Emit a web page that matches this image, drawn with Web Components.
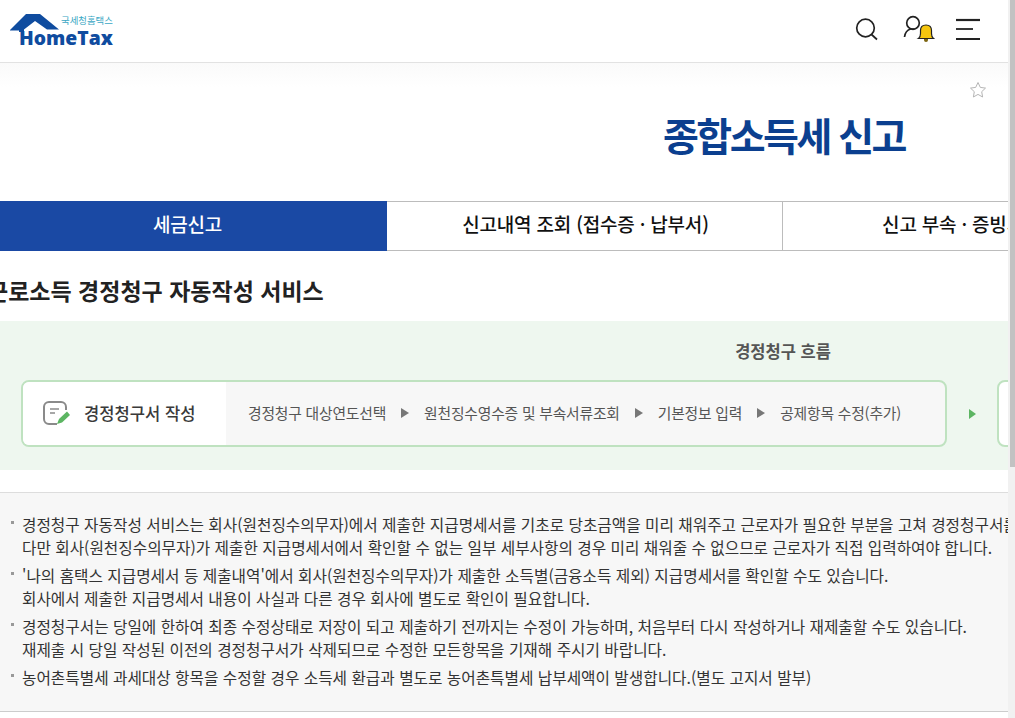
<!DOCTYPE html>
<html lang="ko">
<head>
<meta charset="utf-8">
<title>HomeTax</title>
<style>
  html, body { margin: 0; height: 100%; overflow: hidden; background: #fff; }
  body { font-family: "Noto Sans CJK KR", "Noto Sans", sans-serif; }
</style>
</head>
<body>
<tax-page>
  <tax-header slot="header"></tax-header>
  <tax-title slot="main">종합소득세 신고</tax-title>
  <tax-tabs slot="main"></tax-tabs>
  <tax-heading slot="main">근로소득 경정청구 자동작성 서비스</tax-heading>
  <tax-flow slot="main"></tax-flow>
  <tax-notes slot="main">
    <tax-note>경정청구 자동작성 서비스는 회사(원천징수의무자)에서 제출한 지급명세서를 기초로 당초금액을 미리 채워주고 근로자가 필요한 부분을 고쳐 경정청구서를 제출하는 서비스입니다.<br>다만 회사(원천징수의무자)가 제출한 지급명세서에서 확인할 수 없는 일부 세부사항의 경우 미리 채워줄 수 없으므로 근로자가 직접 입력하여야 합니다.</tax-note>
    <tax-note>'나의 홈택스 지급명세서 등 제출내역'에서 회사(원천징수의무자)가 제출한 소득별(금융소득 제외) 지급명세서를 확인할 수도 있습니다.<br>회사에서 제출한 지급명세서 내용이 사실과 다른 경우 회사에 별도로 확인이 필요합니다.</tax-note>
    <tax-note>경정청구서는 당일에 한하여 최종 수정상태로 저장이 되고 제출하기 전까지는 수정이 가능하며, 처음부터 다시 작성하거나 재제출할 수도 있습니다.<br>재제출 시 당일 작성된 이전의 경정청구서가 삭제되므로 수정한 모든항목을 기재해 주시기 바랍니다.</tax-note>
    <tax-note>농어촌특별세 과세대상 항목을 수정할 경우 소득세 환급과 별도로 농어촌특별세 납부세액이 발생합니다.(별도 고지서 발부)</tax-note>
  </tax-notes>
</tax-page>
<script>
class TaxPage extends HTMLElement {
	constructor() {
		super();
		this.attachShadow({ mode: "open" });
		this.shadowRoot.innerHTML = `
        <style>
          :host { display: flex; width: 1015px; height: 718px; overflow: hidden; }
          .view { width: 1008px; flex-shrink: 0; overflow: hidden; display: flex; flex-direction: column; }
          .body { width: 1400px; margin-left: -13px; background: linear-gradient(#fafafa, #fff 24px); }
          .bar { flex: 1; background: #f1f1f1; display: flex; justify-content: flex-end; }
          .thumb { width: 5px; background: #c2c2c2; height: 467px; }
        </style>
        <div class="view">
          <slot name="header"></slot>
          <div class="body"><slot name="main"></slot></div>
        </div>
        <div class="bar"><div class="thumb"></div></div>
      `;
	}
}

class TaxHeader extends HTMLElement {
	constructor() {
		super();
		this.attachShadow({ mode: "open" });
		this.shadowRoot.innerHTML = `
        <style>
          :host { display: flex; height: 62px; align-items: center; justify-content: space-between; border-bottom: 1px solid #e2e2e2; background: #fff; flex-shrink: 0; }
          .logo { position: relative; width: 104px; height: 36px; margin: -6px 0 0 10px; color: #0f4c9f; }
          .logo svg { position: absolute; left: 0; top: 0; }
          .logo b { position: absolute; left: 9px; top: 20px; font: 800 19.300px/16px "Open Sans", sans-serif; white-space: nowrap; }
          .logo span { position: absolute; left: 51px; top: 4px; font: 400 9.400px/12px "Noto Sans CJK KR", sans-serif; color: #3aa7c4; white-space: nowrap; }
          .tools { display: flex; align-items: center; margin: -4px 28px 0 0; }
          .user { margin: 0 21px 0 24px; }
        </style>
        <div class="logo">
          <svg width="60" height="36" viewBox="0 0 60 36"><path d="M0 20 16 4H30L49 19.500H37L25 11 14 19.500V22H9V20.500H0Z" fill="#0f4c9f"/></svg>
          <span>국세청홈택스</span><b>HomeTax</b>
        </div>
        <div class="tools">
          <svg width="24" height="24" viewBox="0 0 24 24" fill="none" stroke="#222" stroke-width="1.700"><circle cx="10.500" cy="11" r="8.800"/><path d="M16.500 17.500l5.500 5"/></svg>
          <svg class="user" width="32" height="28" viewBox="0 0 32 28" fill="none"><circle cx="10" cy="8" r="6.300" stroke="#222" stroke-width="1.700"/><path d="M1.500 22c.5-4.500 3-7 6-8h4" stroke="#222" stroke-width="1.700"/><path d="M15.500 23.500c1.500-1 2-2.500 2-5v-3c0-3.500 2-5.500 5.500-5.500s5.500 2 5.500 5.500v3c0 2.500.5 4 2 5z" fill="#f6c60e" stroke="#222" stroke-width="1.200"/><path d="M21 24h4v1a2 2 0 0 1-4 0z" fill="#7c6510"/></svg>
          <svg width="24" height="22" viewBox="0 0 24 22" fill="none" stroke="#222"><path d="M0 2h24" stroke-width="2.200"/><path d="M0 11h17" stroke-width="1.800"/><path d="M0 21h24" stroke-width="2"/></svg>
        </div>
      `;
	}
}

class TaxTitle extends HTMLElement {
	constructor() {
		super();
		this.attachShadow({ mode: "open" });
		this.shadowRoot.innerHTML = `
        <style>
          :host { display: block; height: 138px; width: 1022px; position: relative; }
          h1 { margin: 0; padding-top: 43px; text-align: right; padding-right: 104px; font: 700 39px/56px "Noto Sans CJK KR", sans-serif; color: #0b3f8f; letter-spacing: -2.500px; }
          svg { position: absolute; left: 982px; top: 18px; }
        </style>
        <h1><slot></slot></h1>
        <svg width="18" height="18" viewBox="0 0 18 18" fill="#fff" stroke="#b5b5b5"><path d="M9 1.500l2.300 4.900 5.200.7-3.800 3.600.9 5.300L9 13.400l-4.600 2.600.9-5.300L1.500 7.100l5.200-.7z"/></svg>
      `;
	}
}

class TaxTabs extends HTMLElement {
	constructor() {
		super();
		this.attachShadow({ mode: "open" });
		this.shadowRoot.innerHTML = `
        <style>
          :host { display: flex; height: 50px; font: 500 19px/44px "Noto Sans CJK KR", sans-serif; color: #111; letter-spacing: -.2px; }
          div { box-sizing: border-box; width: 396px; height: 50px; padding-left: 2px; text-align: center; border: solid #bcbcbc; border-width: 1px 1px 1px 0; flex-shrink: 0; background: #fff; white-space: nowrap; }
          .on { width: 400px; background: #1a49a4; border-color: #1a49a4; color: #fff; }
        </style>
        <div class="on">세금신고</div>
        <div>신고내역 조회 (접수증 · 납부서)</div>
        <div>신고 부속 · 증빙서류 제출</div>
      `;
	}
}

class TaxHeading extends HTMLElement {
	constructor() {
		super();
		this.attachShadow({ mode: "open" });
		this.shadowRoot.innerHTML = `
        <style>
          :host { display: block; height: 70px; }
          h2 { margin: 0; padding: 22px 0 0 0; font: 700 23px/34px "Noto Sans CJK KR", sans-serif; color: #222; white-space: nowrap; }
        </style>
        <h2><slot></slot></h2>
      `;
	}
}

class TaxFlow extends HTMLElement {
	constructor() {
		super();
		this.attachShadow({ mode: "open" });
		this.shadowRoot.innerHTML = `
        <style>
          :host { display: block; box-sizing: border-box; height: 149px; background: #eef7ef; padding: 19px 0 0 34px; }
          h3 { margin: 0; width: 1524px; text-align: center; font: 700 16.500px/22px "Noto Sans CJK KR", sans-serif; color: #555; }
          .row { display: flex; align-items: center; margin-top: 18px; white-space: nowrap; }
          .card { box-sizing: border-box; height: 67px; width: 926px; display: flex; flex-shrink: 0; border: 2px solid #bfe2c0; border-radius: 8px; overflow: hidden; background: #f7f7f7; }
          .name { box-sizing: border-box; width: 203px; background: #fff; display: flex; align-items: center; gap: 14px; padding: 0 0 2px 19px; font: 500 16.600px/24px "Noto Sans CJK KR", sans-serif; color: #3a3a3a; }
          .steps { flex: 1; display: flex; align-items: center; padding: 0 0 2px 22px; font: 400 14.800px/20px "Noto Sans CJK KR", sans-serif; color: #555; letter-spacing: -.2px; }
          .steps i { width: 0; height: 0; margin: 0 15px; border-left: 8px solid #777; border-top: 5px solid transparent; border-bottom: 5px solid transparent; }
          .next { width: 0; height: 0; margin: 0 21px 0 22px; border-left: 7px solid #5cb562; border-top: 5px solid transparent; border-bottom: 5px solid transparent; }
          .card.more { width: 200px; background: #fff; }
        </style>
        <h3>경정청구 흐름</h3>
        <div class="row">
          <div class="card">
            <div class="name">
              <svg width="28" height="26" viewBox="0 0 28 26" fill="none"><path d="M15 24H7a5 5 0 0 1-5-5V7a5 5 0 0 1 5-5h12a5 5 0 0 1 5 5v3" stroke="#8a8a8a" stroke-width="2"/><path d="M8 9h9M8 13h5" stroke="#8a8a8a" stroke-width="1.700"/><path d="M15 24l2-5 8-7.500 3 3.500-8 7.500z" fill="#5cb562"/></svg>
              경정청구서 작성
            </div>
            <div class="steps">경정청구 대상연도선택<i></i>원천징수영수증 및 부속서류조회<i></i>기본정보 입력<i></i>공제항목 수정(추가)</div>
          </div>
          <span class="next"></span>
          <div class="card more"></div>
        </div>
      `;
	}
}

class TaxNotes extends HTMLElement {
	constructor() {
		super();
		this.attachShadow({ mode: "open" });
		this.shadowRoot.innerHTML = `
        <style>
          :host { display: flex; flex-direction: column; gap: 5px; box-sizing: border-box; height: 220px; margin-top: 22px; padding: 20px 0 0 35px; background: #f7f7f7; border-top: 1px solid #ddd; border-bottom: 1px solid #ccc; }
        </style>
        <slot></slot>
      `;
	}
}

class TaxNote extends HTMLElement {
	constructor() {
		super();
		this.attachShadow({ mode: "open" });
		this.shadowRoot.innerHTML = `
        <style>
          :host { display: block; position: relative; font: 400 15.690px/23px "Noto Sans CJK KR", sans-serif; color: #333; white-space: nowrap; }
          :host::before { content: ""; position: absolute; left: -11px; top: 8px; width: 3px; height: 3px; background: #999; }
        </style>
        <slot></slot>
      `;
	}
}

customElements.define("tax-page", TaxPage);
customElements.define("tax-header", TaxHeader);
customElements.define("tax-title", TaxTitle);
customElements.define("tax-tabs", TaxTabs);
customElements.define("tax-heading", TaxHeading);
customElements.define("tax-flow", TaxFlow);
customElements.define("tax-notes", TaxNotes);
customElements.define("tax-note", TaxNote);
</script>
</body>
</html>
